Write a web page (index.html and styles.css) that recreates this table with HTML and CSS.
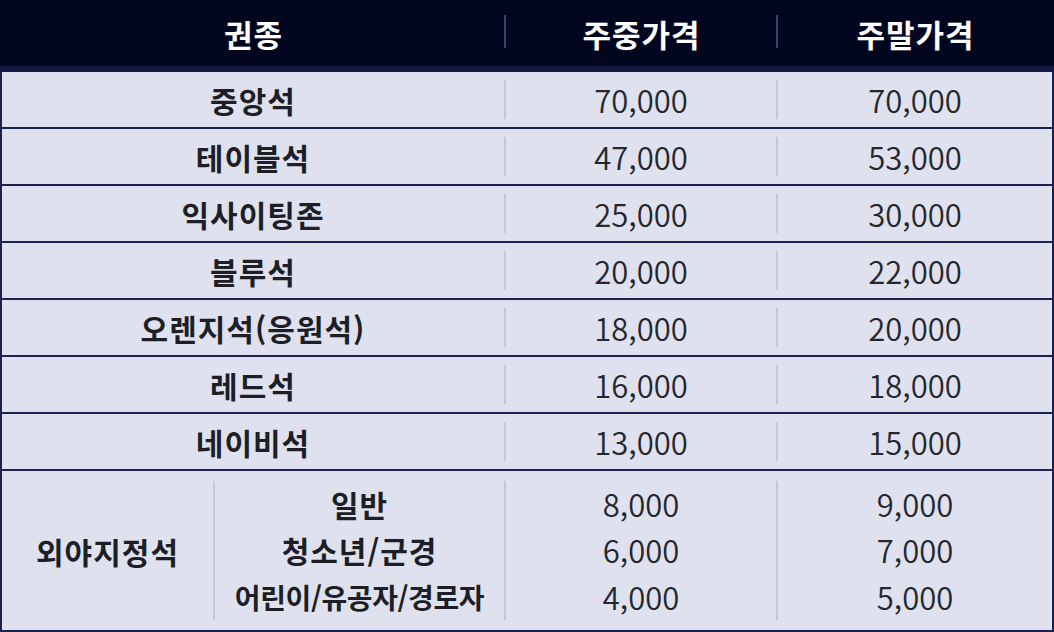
FILE: index.html
```html
<!DOCTYPE html>
<html lang="ko">
<head>
<meta charset="utf-8">
<link rel="stylesheet" href="styles.css">
</head>
<body>
<div class="table">
  <div class="row head">
    <div class="cell">권종</div><div class="div"></div>
    <div class="cell">주중가격</div><div class="div"></div>
    <div class="cell">주말가격</div>
  </div>
  <div class="row">
    <div class="cell label">중앙석</div><div class="div"></div>
    <div class="cell num">70,000</div><div class="div"></div>
    <div class="cell num">70,000</div>
  </div>
  <div class="row">
    <div class="cell label">테이블석</div><div class="div"></div>
    <div class="cell num">47,000</div><div class="div"></div>
    <div class="cell num">53,000</div>
  </div>
  <div class="row">
    <div class="cell label">익사이팅존</div><div class="div"></div>
    <div class="cell num">25,000</div><div class="div"></div>
    <div class="cell num">30,000</div>
  </div>
  <div class="row">
    <div class="cell label">블루석</div><div class="div"></div>
    <div class="cell num">20,000</div><div class="div"></div>
    <div class="cell num">22,000</div>
  </div>
  <div class="row">
    <div class="cell label">오렌지석(응원석)</div><div class="div"></div>
    <div class="cell num">18,000</div><div class="div"></div>
    <div class="cell num">20,000</div>
  </div>
  <div class="row">
    <div class="cell label">레드석</div><div class="div"></div>
    <div class="cell num">16,000</div><div class="div"></div>
    <div class="cell num">18,000</div>
  </div>
  <div class="row">
    <div class="cell label">네이비석</div><div class="div"></div>
    <div class="cell num">13,000</div><div class="div"></div>
    <div class="cell num">15,000</div>
  </div>
  <div class="row last">
    <div class="cell label">외야지정석</div><div class="div"></div>
    <div class="cell label stack"><span>일반</span><span>청소년/군경</span><span class="tight">어린이/유공자/경로자</span></div><div class="div"></div>
    <div class="cell num stack"><span>8,000</span><span>6,000</span><span>4,000</span></div><div class="div"></div>
    <div class="cell num stack"><span>9,000</span><span>7,000</span><span>5,000</span></div>
  </div>
</div>
</body>
</html>
```

FILE: styles.css
```css
html, body {
  margin: 0;
  padding: 0;
  background: #dfe2ee;
}
body {
  width: 1054px;
  height: 632px;
  overflow: hidden;
  font-family: "Noto Sans CJK KR", "Noto Sans", sans-serif;
}
.table {
  display: flex;
  flex-direction: column;
  width: 1054px;
  height: 632px;
  box-sizing: border-box;
  border-left: 2px solid #1b2150;
  border-right: 2px solid #1b2150;
  border-bottom: 2px solid #1b2150;
  background: #dfe2ee;
}
.row {
  display: grid;
  grid-template-columns: 502px 2px 270px 2px 1fr;
  height: 55px;
  border-bottom: 2px solid #1b2150;
}
.row.head {
  height: 66px;
  margin: 0 -2px;
  padding: 0 2px;
  background: #03061f;
  border-bottom: 6px solid #141a44;
}
.cell {
  display: flex;
  align-items: center;
  justify-content: center;
}
.head .cell {
  color: #ffffff;
  font-weight: 700;
  font-size: 31px;
  letter-spacing: 1px;
  padding-left: 1px;
}
.div {
  background: #c4c7d4;
  margin: 8px 0;
}
.head .div {
  background: #3b4267;
  margin: 15px 0 18px;
}
.label {
  color: #1d1e26;
  font-weight: 700;
  font-size: 30px;
  letter-spacing: 1px;
}
.num {
  color: #26272e;
  font-weight: 350;
  font-size: 31px;
}
.row.last {
  flex: 1;
  height: auto;
  border-bottom: none;
  grid-template-columns: 211px 2px 289px 2px 270px 2px 1fr;
}
.row.last .div {
  margin: 10px 0 10px;
}
.stack {
  flex-direction: column;
}
.stack span {
  display: block;
  line-height: 46.5px;
}
.stack .tight {
  font-size: 28px;
  letter-spacing: -0.4px;
}
```
